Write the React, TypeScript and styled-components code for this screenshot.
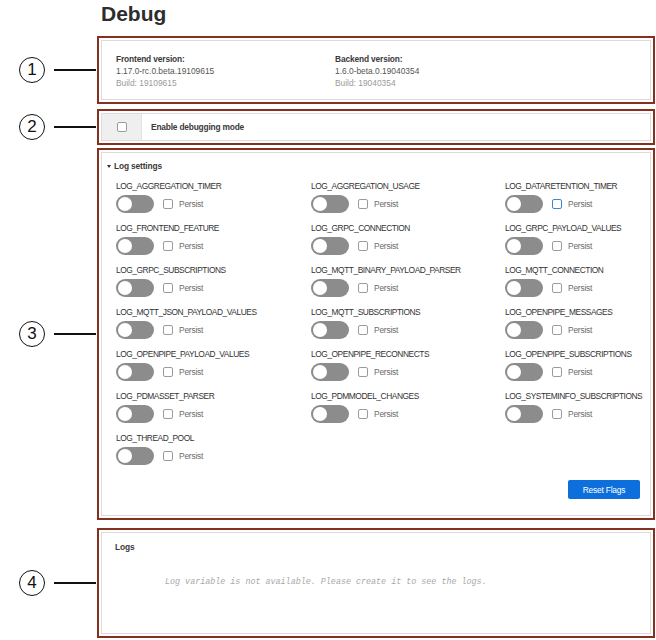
import React from "react";
import styled, { createGlobalStyle } from "styled-components";

const Global = createGlobalStyle`
  html, body { margin: 0; padding: 0; background: #ffffff; }
  body { font-family: "Liberation Sans", Arial, sans-serif; color: #333; }
`;

const Page = styled.div`
  display: grid;
  grid-template-columns: 97px 558px;
  width: 656px;
`;

const Title = styled.h1`
  grid-column: 2;
  margin: 2px 0 0 4px;
  font-weight: 700;
  font-size: 21px;
  line-height: 24px;
  color: #2d2d2d;
`;

const CalloutCell = styled.div<{ $top: number }>`
  grid-column: 1;
  margin-top: ${(p) => p.$top}px;
  display: flex;
  align-items: center;
  padding-left: 19px;
`;

const Circle = styled.div`
  width: 24px;
  height: 24px;
  border: 1.5px solid #111;
  border-radius: 50%;
  display: flex;
  align-items: center;
  justify-content: center;
  font-size: 17px;
  color: #111;
  flex: none;
`;

const Leader = styled.div`
  width: 42px;
  height: 1.5px;
  background: #111;
  margin-left: 9px;
`;

const Frame = styled.section<{ $top: number; $h: number }>`
  grid-column: 2;
  margin-top: ${(p) => p.$top}px;
  height: ${(p) => p.$h}px;
  box-sizing: border-box;
  border: 2px solid #86311f;
  padding: 2px;
  background: #fff;
  display: flex;
`;

const Inner = styled.div<{ $pad?: string }>`
  flex: 1;
  border: 1px solid #dcdcdc;
  padding: ${(p) => p.$pad || "0"};
  display: flex;
  flex-direction: column;
  min-width: 0;
`;

const VersionRow = styled.div`
  display: grid;
  grid-template-columns: 219px 1fr;
`;

const VersionCol = styled.div`
  display: flex;
  flex-direction: column;
`;

const Strong = styled.div`
  font-weight: 700;
  font-size: 8.4px;
  letter-spacing: -0.15px;
  line-height: 12px;
  color: #3a3a3a;
`;

const Text = styled.div<{ $muted?: boolean }>`
  font-size: 8.4px;
  line-height: 12px;
  color: ${(p) => (p.$muted ? "#9a9a9a" : "#555")};
`;

const DebugRow = styled.div`
  flex: 1;
  display: flex;
  align-items: stretch;
`;

const GreyCell = styled.div`
  width: 39px;
  background: #efefef;
  border-right: 1px solid #e2e2e2;
  display: flex;
  align-items: center;
  justify-content: center;
`;

const Box = styled.span<{ $focus?: boolean }>`
  display: inline-block;
  width: 10px;
  height: 10px;
  box-sizing: border-box;
  border: 1px solid ${(p) => (p.$focus ? "#3b86d6" : "#9c9c9c")};
  border-radius: 2px;
  background: #fff;
  flex: none;
`;

const DebugLabel = styled.div`
  display: flex;
  align-items: center;
  padding-left: 9px;
  font-weight: 700;
  font-size: 8.4px;
  letter-spacing: -0.2px;
  color: #3a3a3a;
`;

const SettingsHeader = styled.div`
  font-size: 8.4px;
  letter-spacing: -0.15px;
  line-height: 12px;
  font-weight: 700;
  color: #3a3a3a;
  display: flex;
  align-items: center;
  gap: 3px;
  &::before {
    content: "";
    border-left: 2.5px solid transparent;
    border-right: 2.5px solid transparent;
    border-top: 3.5px solid #333;
  }
`;

const FlagGrid = styled.div`
  display: grid;
  grid-template-columns: 195px 194px 1fr;
  row-gap: 9px;
  margin: 8px 0 0 9px;
`;

const Flag = styled.div`
  display: flex;
  flex-direction: column;
  gap: 3px;
`;

const FlagName = styled.div`
  font-size: 8.4px;
  letter-spacing: -0.45px;
  line-height: 12px;
  color: #333;
  white-space: nowrap;
`;

const Controls = styled.div`
  display: flex;
  align-items: center;
  height: 18px;
`;

const Toggle = styled.span`
  width: 38px;
  height: 18px;
  border-radius: 9px;
  background: #8c8c8c;
  position: relative;
  flex: none;
  &::after {
    content: "";
    position: absolute;
    left: 2px;
    top: 2px;
    width: 14px;
    height: 14px;
    border-radius: 50%;
    background: #fff;
  }
`;

const PersistLabel = styled.span`
  font-size: 8.4px;
  letter-spacing: -0.2px;
  color: #6b6b6b;
  margin-left: 6px;
`;

const ControlsBox = styled.span`
  margin-left: 9px;
  display: flex;
`;

const Footer = styled.div`
  display: flex;
  justify-content: flex-end;
  margin-top: auto;
  padding-right: 10px;
`;

const Button = styled.button`
  width: 72px;
  height: 19px;
  border: none;
  border-radius: 2px;
  background: #0d6fdc;
  color: #fff;
  font-family: inherit;
  font-size: 8.4px;
  letter-spacing: -0.2px;
  padding: 0;
`;

const LogMessage = styled.div`
  margin: 24px 0 0 50px;
  font-family: "Liberation Mono", "Courier New", monospace;
  font-style: italic;
  font-size: 8.4px;
  line-height: 11px;
  color: #a8a8a8;
  white-space: nowrap;
`;

const flags = [
  "LOG_AGGREGATION_TIMER",
  "LOG_AGGREGATION_USAGE",
  "LOG_DATARETENTION_TIMER",
  "LOG_FRONTEND_FEATURE",
  "LOG_GRPC_CONNECTION",
  "LOG_GRPC_PAYLOAD_VALUES",
  "LOG_GRPC_SUBSCRIPTIONS",
  "LOG_MQTT_BINARY_PAYLOAD_PARSER",
  "LOG_MQTT_CONNECTION",
  "LOG_MQTT_JSON_PAYLOAD_VALUES",
  "LOG_MQTT_SUBSCRIPTIONS",
  "LOG_OPENPIPE_MESSAGES",
  "LOG_OPENPIPE_PAYLOAD_VALUES",
  "LOG_OPENPIPE_RECONNECTS",
  "LOG_OPENPIPE_SUBSCRIPTIONS",
  "LOG_PDMASSET_PARSER",
  "LOG_PDMMODEL_CHANGES",
  "LOG_SYSTEMINFO_SUBSCRIPTIONS",
  "LOG_THREAD_POOL",
];

const Callout = ({ n, top }: { n: number; top: number }) => (
  <CalloutCell $top={top}>
    <Circle>{n}</Circle>
    <Leader />
  </CalloutCell>
);

export default function App() {
  return (
    <>
      <Global />
      <Page>
        <Title>Debug</Title>

        <Callout n={1} top={10} />
        <Frame $top={10} $h={68}>
          <Inner $pad="12px 0 0 14px">
            <VersionRow>
              <VersionCol>
                <Strong>Frontend version:</Strong>
                <Text>1.17.0-rc.0.beta.19109615</Text>
                <Text $muted>Build: 19109615</Text>
              </VersionCol>
              <VersionCol>
                <Strong>Backend version:</Strong>
                <Text>1.6.0-beta.0.19040354</Text>
                <Text $muted>Build: 19040354</Text>
              </VersionCol>
            </VersionRow>
          </Inner>
        </Frame>

        <Callout n={2} top={5} />
        <Frame $top={5} $h={36}>
          <Inner>
            <DebugRow>
              <GreyCell>
                <Box />
              </GreyCell>
              <DebugLabel>Enable debugging mode</DebugLabel>
            </DebugRow>
          </Inner>
        </Frame>

        <Callout n={3} top={3} />
        <Frame $top={3} $h={372}>
          <Inner $pad="7px 0 16px 5px">
            <SettingsHeader>Log settings</SettingsHeader>
            <FlagGrid>
              {flags.map((f) => (
                <Flag key={f}>
                  <FlagName>{f}</FlagName>
                  <Controls>
                    <Toggle />
                    <ControlsBox>
                      <Box $focus={f === "LOG_DATARETENTION_TIMER"} />
                    </ControlsBox>
                    <PersistLabel>Persist</PersistLabel>
                  </Controls>
                </Flag>
              ))}
            </FlagGrid>
            <Footer>
              <Button>Reset Flags</Button>
            </Footer>
          </Inner>
        </Frame>

        <Callout n={4} top={8} />
        <Frame $top={8} $h={110}>
          <Inner $pad="8px 0 0 13px">
            <Strong>Logs</Strong>
            <LogMessage>
              Log variable is not available. Please create it to see the logs.
            </LogMessage>
          </Inner>
        </Frame>
      </Page>
    </>
  );
}
